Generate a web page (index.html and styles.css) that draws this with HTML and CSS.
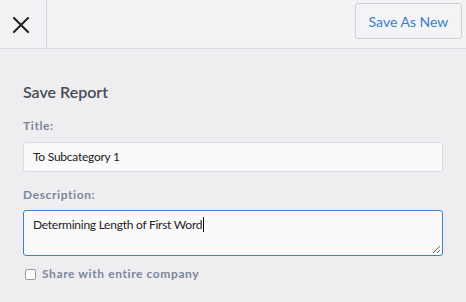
FILE: index.html
```html
<!DOCTYPE html>
<html>
<head>
<meta charset="utf-8">
<link rel="stylesheet" href="styles.css">
</head>
<body>
<header class="topbar">
  <div class="close-cell">
    <svg class="close-icon" width="16" height="16" viewBox="0 0 16 16"><path d="M1 1 L15 15 M15 1 L1 15" stroke="#222" stroke-width="2" stroke-linecap="square" fill="none"/></svg>
  </div>
  <div class="spacer"></div>
  <button class="btn-secondary">Save As New</button>
</header>
<main class="form">
  <h1 class="title">Save Report</h1>
  <label class="field-label">Title:</label>
  <div class="input">To Subcategory 1</div>
  <label class="field-label desc-label">Description:</label>
  <div class="textarea">Determining Length of First Word<span class="caret"></span>
    <svg class="resize" width="9" height="9" viewBox="0 0 9 9"><path d="M8 1 L1 8 M8 5 L5 8" stroke="#666" stroke-width="1" fill="none"/></svg>
  </div>
  <div class="check-row">
    <span class="checkbox"></span>
    <span class="check-label">Share with entire company</span>
  </div>
</main>
</body>
</html>
```

FILE: styles.css
```css
* { box-sizing: border-box; }
html, body { margin: 0; padding: 0; }
body {
  width: 466px;
  height: 302px;
  background: #eeeef1;
  font-family: Lato, "Open Sans", sans-serif;
  overflow: hidden;
}
.topbar {
  display: flex;
  align-items: center;
  height: 49px;
  background: #f3f3f5;
  border-bottom: 1px solid #dcdce0;
}
.close-cell {
  width: 47px;
  height: 48px;
  border-right: 1px solid #d6d6da;
  display: flex;
  align-items: center;
  justify-content: center;
  padding-right: 5px;
  padding-top: 1px;
}
.close-icon { display: block; }
.spacer { flex: 1; }
.btn-secondary {
  margin: 3px 4px 10px 0;
  align-self: flex-start;
  height: 36px;
  width: 107px;
  padding: 0;
  background: #f4f4f6;
  border: 1px solid #cfd0d4;
  border-radius: 3px;
  color: #3a7fcb;
  font-family: Lato, sans-serif;
  font-size: 14px;
}
.form {
  padding: 33px 23px 0 23px;
  display: flex;
  flex-direction: column;
}
.title {
  margin: 0;
  font-size: 16px;
  line-height: 20px;
  font-weight: 600;
  color: #474c55;
}
.field-label {
  display: block;
  margin-top: 16px;
  margin-bottom: 8px;
  font-size: 12px;
  line-height: 16px;
  font-weight: 700;
  letter-spacing: 0.6px;
  color: #7d8699;
}
.desc-label { margin-top: 15px; margin-bottom: 7px; }
.input {
  height: 30px;
  border: 1px solid #d5dde7;
  border-radius: 3px;
  background: #fafafa;
  padding: 0 9px;
  font-size: 12px;
  letter-spacing: -0.25px;
  line-height: 28px;
  color: #222;
}
.textarea {
  position: relative;
  height: 46px;
  border: 1px solid #3b82d0;
  border-radius: 3px;
  background: #fafafa;
  padding: 6px 9px;
  font-size: 12px;
  letter-spacing: -0.25px;
  line-height: 16px;
  color: #222;
}
.caret {
  display: inline-block;
  width: 1px;
  height: 15px;
  background: #111;
  vertical-align: -3px;
  margin-left: 1px;
}
.resize {
  position: absolute;
  right: 1px;
  bottom: 1px;
}
.check-row {
  display: flex;
  align-items: center;
  margin-top: 10px;
  height: 16px;
}
.checkbox {
  width: 11px;
  height: 11px;
  border: 1px solid #9a9ca2;
  border-radius: 2px;
  background: #fff;
  margin-left: 2px;
  margin-right: 6px;
}
.check-label {
  font-size: 12px;
  line-height: 16px;
  font-weight: 700;
  letter-spacing: 0.6px;
  color: #7d8699;
}
```
